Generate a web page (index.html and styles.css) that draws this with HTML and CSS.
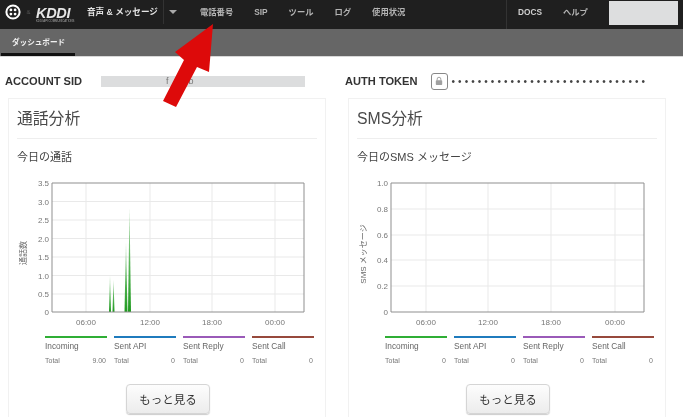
FILE: index.html
```html
<!DOCTYPE html>
<html lang="ja">
<head>
<meta charset="utf-8">
<title>ダッシュボード</title>
<link rel="stylesheet" href="styles.css">
</head>
<body>
<header class="topbar">
  <svg class="logo-mark" viewBox="0 0 16 16" aria-hidden="true">
    <circle cx="8" cy="8" r="6.6" fill="none" stroke="#fff" stroke-width="2"/>
    <circle cx="5.900" cy="5.900" r="1.400" fill="#fff"/><circle cx="10.100" cy="5.900" r="1.400" fill="#fff"/>
    <circle cx="5.900" cy="10.100" r="1.400" fill="#fff"/><circle cx="10.100" cy="10.100" r="1.400" fill="#fff"/>
  </svg>
  <span class="logo-amp">&amp;</span>
  <span class="logo-kddi"><span>KDDI</span><small>KDDI API COMMUNICATIONS</small></span>
  <span class="nav-main">音声 &amp; メッセージ</span>
  <span class="caret-wrap"><span class="caret"></span></span>
  <nav class="nav-list">
    <span>電話番号</span><span>SIP</span><span>ツール</span><span>ログ</span><span>使用状況</span>
  </nav>
  <nav class="nav-right">
    <span class="nav-docs">DOCS</span><span>ヘルプ</span>
  </nav>
  <span class="account-box"></span>
</header>
<div class="subbar"><span class="tab">ダッシュボード</span></div>

<main class="columns">
  <section class="column">
    <div class="cred">
      <span class="cred-label">ACCOUNT SID</span>
      <span class="sid-mask"><span>f</span><span>b</span></span>
    </div>
    <article class="card">
      <h2>通話分析</h2>
      <h3>今日の通話</h3>
      <svg class="chart" viewBox="0 0 318 160" aria-label="今日の通話">
        <defs>
          <linearGradient id="spikefill" x1="0" y1="0" x2="0" y2="1">
            <stop offset="0" stop-color="#b5dcb5"/>
            <stop offset="0.5" stop-color="#5fb85f"/>
            <stop offset="1" stop-color="#1f9a1f"/>
          </linearGradient>
        </defs>
        <g class="grid">
          <path d="M44 30.500H296M44 49H296M44 67.500H296M44 86H296M44 104.500H296M44 123H296"/>
          <path d="M78 12V141M142 12V141M204 12V141M267 12V141"/>
        </g>
        <polygon class="spike" points="101,141 102,104 103,141"/>
        <polygon class="spike" points="104.500,141 105.500,108 106.500,141"/>
        <polygon class="spike" points="116.500,141 118,71 119.500,141"/>
        <polygon class="spike" points="120,141 121.500,36 123,141"/>
        <path class="frame" d="M44 12H296V141H44Z"/>
        <g class="ylabels">
          <text x="41" y="15">3.5</text><text x="41" y="33.500">3.0</text><text x="41" y="52">2.5</text>
          <text x="41" y="70.500">2.0</text><text x="41" y="89">1.5</text><text x="41" y="107.500">1.0</text>
          <text x="41" y="126">0.5</text><text x="41" y="144">0</text>
        </g>
        <g class="xlabels">
          <text x="78" y="154">06:00</text><text x="142" y="154">12:00</text>
          <text x="204" y="154">18:00</text><text x="267" y="154">00:00</text>
        </g>
        <text class="yaxis" transform="translate(18 82) rotate(-90)">通話数</text>
      </svg>
      <div class="legend">
        <div class="lg lg-green"><b>Incoming</b><p><span>Total</span><span>9.00</span></p></div>
        <div class="lg lg-blue"><b>Sent API</b><p><span>Total</span><span>0</span></p></div>
        <div class="lg lg-purple"><b>Sent Reply</b><p><span>Total</span><span>0</span></p></div>
        <div class="lg lg-brown"><b>Sent Call</b><p><span>Total</span><span>0</span></p></div>
      </div>
      <button class="more" type="button">もっと見る</button>
    </article>
  </section>

  <section class="column">
    <div class="cred">
      <span class="cred-label">AUTH TOKEN</span>
      <span class="lock">
        <svg viewBox="0 0 10 12" aria-hidden="true">
          <path d="M2.700 5.500V3.600a2.300 2.300 0 0 1 4.600 0V5.500" fill="none" stroke="#a0a0a0" stroke-width="1.200"/>
          <rect x="1" y="5" width="8" height="6" rx="1" fill="#a0a0a0"/>
        </svg>
      </span>
      <span class="dots">••••••••••••••••••••••••••••••</span>
    </div>
    <article class="card">
      <h2>SMS分析</h2>
      <h3>今日のSMS メッセージ</h3>
      <svg class="chart" viewBox="0 0 318 160" aria-label="今日のSMS メッセージ">
        <g class="grid">
          <path d="M43 38H296M43 64H296M43 89H296M43 115H296"/>
          <path d="M78 12V141M140 12V141M203 12V141M267 12V141"/>
        </g>
        <path class="frame" d="M43 12H296V141H43Z"/>
        <g class="ylabels">
          <text x="40" y="15">1.0</text><text x="40" y="41">0.8</text><text x="40" y="67">0.6</text>
          <text x="40" y="92">0.4</text><text x="40" y="118">0.2</text><text x="40" y="144">0</text>
        </g>
        <g class="xlabels">
          <text x="78" y="154">06:00</text><text x="140" y="154">12:00</text>
          <text x="203" y="154">18:00</text><text x="267" y="154">00:00</text>
        </g>
        <text class="yaxis" transform="translate(18 83) rotate(-90)">SMS メッセージ</text>
      </svg>
      <div class="legend">
        <div class="lg lg-green"><b>Incoming</b><p><span>Total</span><span>0</span></p></div>
        <div class="lg lg-blue"><b>Sent API</b><p><span>Total</span><span>0</span></p></div>
        <div class="lg lg-purple"><b>Sent Reply</b><p><span>Total</span><span>0</span></p></div>
        <div class="lg lg-brown"><b>Sent Call</b><p><span>Total</span><span>0</span></p></div>
      </div>
      <button class="more" type="button">もっと見る</button>
    </article>
  </section>
</main>

<svg class="arrow" viewBox="0 0 70 100" aria-hidden="true">
  <polygon points="63,14 59,62 47,57 26,97 13,91 34,50 25,42" fill="#dd0a0a"/>
</svg>
</body>
</html>
```
FILE: styles.css
```css
* { box-sizing: border-box; }
html, body { margin: 0; height: 417px; overflow: hidden; background: #fff; }
body {
  position: relative;
  font-family: "Liberation Sans", "Noto Sans CJK JP", sans-serif;
  color: #444;
  filter: blur(0.35px);
}

.topbar {
  display: flex;
  align-items: center;
  height: 29px;
  padding-bottom: 5px;
  background: #1f1f1f;
  color: #b4b4b4;
  font-size: 8.300px;
  line-height: 12px;
  font-weight: 700;
}
.logo-mark { width: 16px; height: 16px; margin-left: 5px; flex: none; }
.logo-amp { width: 15px; text-align: center; font-size: 6px; color: #555; font-weight: 400; }
.logo-kddi {
  display: flex;
  flex-direction: column;
  width: 51px;
  margin-top: 5px;
  color: #e6e6e6;
}
.logo-kddi span {
  height: 12px;
  font-size: 14.500px;
  line-height: 12px;
  font-style: italic;
  letter-spacing: -0.300px;
}
.logo-kddi small {
  height: 3px;
  margin-top: 1px;
  font-size: 2.800px;
  line-height: 3px;
  font-weight: 400;
  color: #aaa;
  white-space: nowrap;
}
.nav-main { width: 76px; font-size: 8.600px; color: #e4e4e4; white-space: nowrap; }
.caret-wrap {
  display: flex;
  align-items: center;
  align-self: flex-start;
  height: 24px;
  width: 37px;
  padding-left: 5px;
  border-left: 1px solid #333;
}
.caret {
  width: 0;
  height: 0;
  border-left: 4px solid transparent;
  border-right: 4px solid transparent;
  border-top: 4px solid #aaa;
}
.nav-list { display: flex; gap: 21px; width: 306px; white-space: nowrap; }
.nav-right {
  display: flex;
  gap: 21px;
  align-self: flex-start;
  align-items: center;
  width: 103px;
  height: 29px;
  padding: 0 0 5px 11px;
  border-left: 1px solid #333;
  white-space: nowrap;
}
.nav-docs { color: #d0d0d0; }
.account-box { align-self: flex-start; width: 69px; height: 24px; margin-top: 1px; background: #dddedf; }

.subbar {
  display: flex;
  height: 28px;
  padding-left: 1px;
  background: #666;
  border-bottom: 1px solid #d8d8d8;
}
.tab {
  width: 74px;
  height: 27px;
  padding: 8px 0 0 11px;
  border-bottom: 3px solid #111;
  color: #f0f0f0;
  font-size: 7.600px;
  line-height: 12px;
  font-weight: 700;
  white-space: nowrap;
}

.columns { display: flex; }
.column { flex: none; }
.column:first-child { width: 345px; }
.cred { display: flex; align-items: center; height: 41px; padding-top: 7px; }
.cred-label { font-size: 11.100px; font-weight: 700; color: #333; white-space: nowrap; }
.column:first-child .cred { padding-left: 5px; }
.sid-mask {
  display: flex;
  align-items: center;
  gap: 20px;
  width: 204px;
  height: 11px;
  margin-left: 19px;
  padding-left: 65px;
  background: #dcddde;
  font-size: 9px;
  color: #777;
}
.lock {
  display: flex;
  justify-content: center;
  align-items: center;
  width: 17px;
  height: 17px;
  margin-left: 13px;
  border: 1px solid #888;
  border-radius: 3px;
}
.lock svg { width: 8px; height: 10px; }
.dots {
  margin-left: 4px;
  font-size: 10px;
  letter-spacing: 3.050px;
  color: #444;
  white-space: nowrap;
}

.card {
  width: 318px;
  height: 319px;
  margin-left: 8px;
  padding: 0 0 0 8px;
  border: 1px solid #f1f1f1;
  border-bottom: 0;
}
.column + .column .card { margin-left: 3px; }
.card h2 {
  width: 300px;
  height: 40px;
  margin: 0;
  padding-top: 8px;
  border-bottom: 1px solid #eee;
  font-size: 15.800px;
  line-height: 24px;
  font-weight: 400;
  color: #4a4a4a;
}
.card h3 {
  margin: 0;
  height: 32px;
  padding-top: 10px;
  font-size: 11px;
  line-height: 17px;
  font-weight: 400;
  color: #444;
}
.chart { display: block; width: 318px; height: 160px; margin-left: -9px; }
.grid path { fill: none; stroke: #e9e9e9; stroke-width: 1; }
.frame { fill: none; stroke: #8f8f8f; stroke-width: 1; }
.spike { fill: url(#spikefill); }
.ylabels text { font-size: 8px; fill: #777; text-anchor: end; }
.xlabels text { font-size: 8px; fill: #777; text-anchor: middle; }
.yaxis { font-size: 8px; fill: #666; text-anchor: middle; }

.legend {
  display: grid;
  grid-template-columns: repeat(4, 62px);
  gap: 7px;
  margin: 5px 0 0 28px;
}
.lg { border-top: 2px solid #999; padding-top: 2px; }
.lg b { display: block; font-size: 8.300px; line-height: 12px; font-weight: 400; color: #666; }
.lg p {
  display: flex;
  justify-content: space-between;
  margin: 4px 0 0;
  padding-right: 1px;
  font-size: 7px;
  line-height: 10px;
  color: #777;
}
.lg-green { border-color: #2fae35; }
.lg-blue { border-color: #1f7bbd; }
.lg-purple { border-color: #9a5ab8; }
.lg-brown { border-color: #97493c; }

.more {
  display: block;
  width: 84px;
  height: 30px;
  margin: 18px 0 0 109px;
  padding: 0;
  border: 1px solid #d5d5d5;
  border-radius: 4px;
  background: linear-gradient(#fdfdfd, #ececec);
  box-shadow: 0 1px 1px #ccc;
  font-family: "Noto Sans CJK JP", sans-serif;
  font-size: 11.500px;
  color: #333;
}

.arrow {
  position: absolute;
  left: 150px;
  top: 10px;
  width: 70px;
  height: 100px;
}
```
